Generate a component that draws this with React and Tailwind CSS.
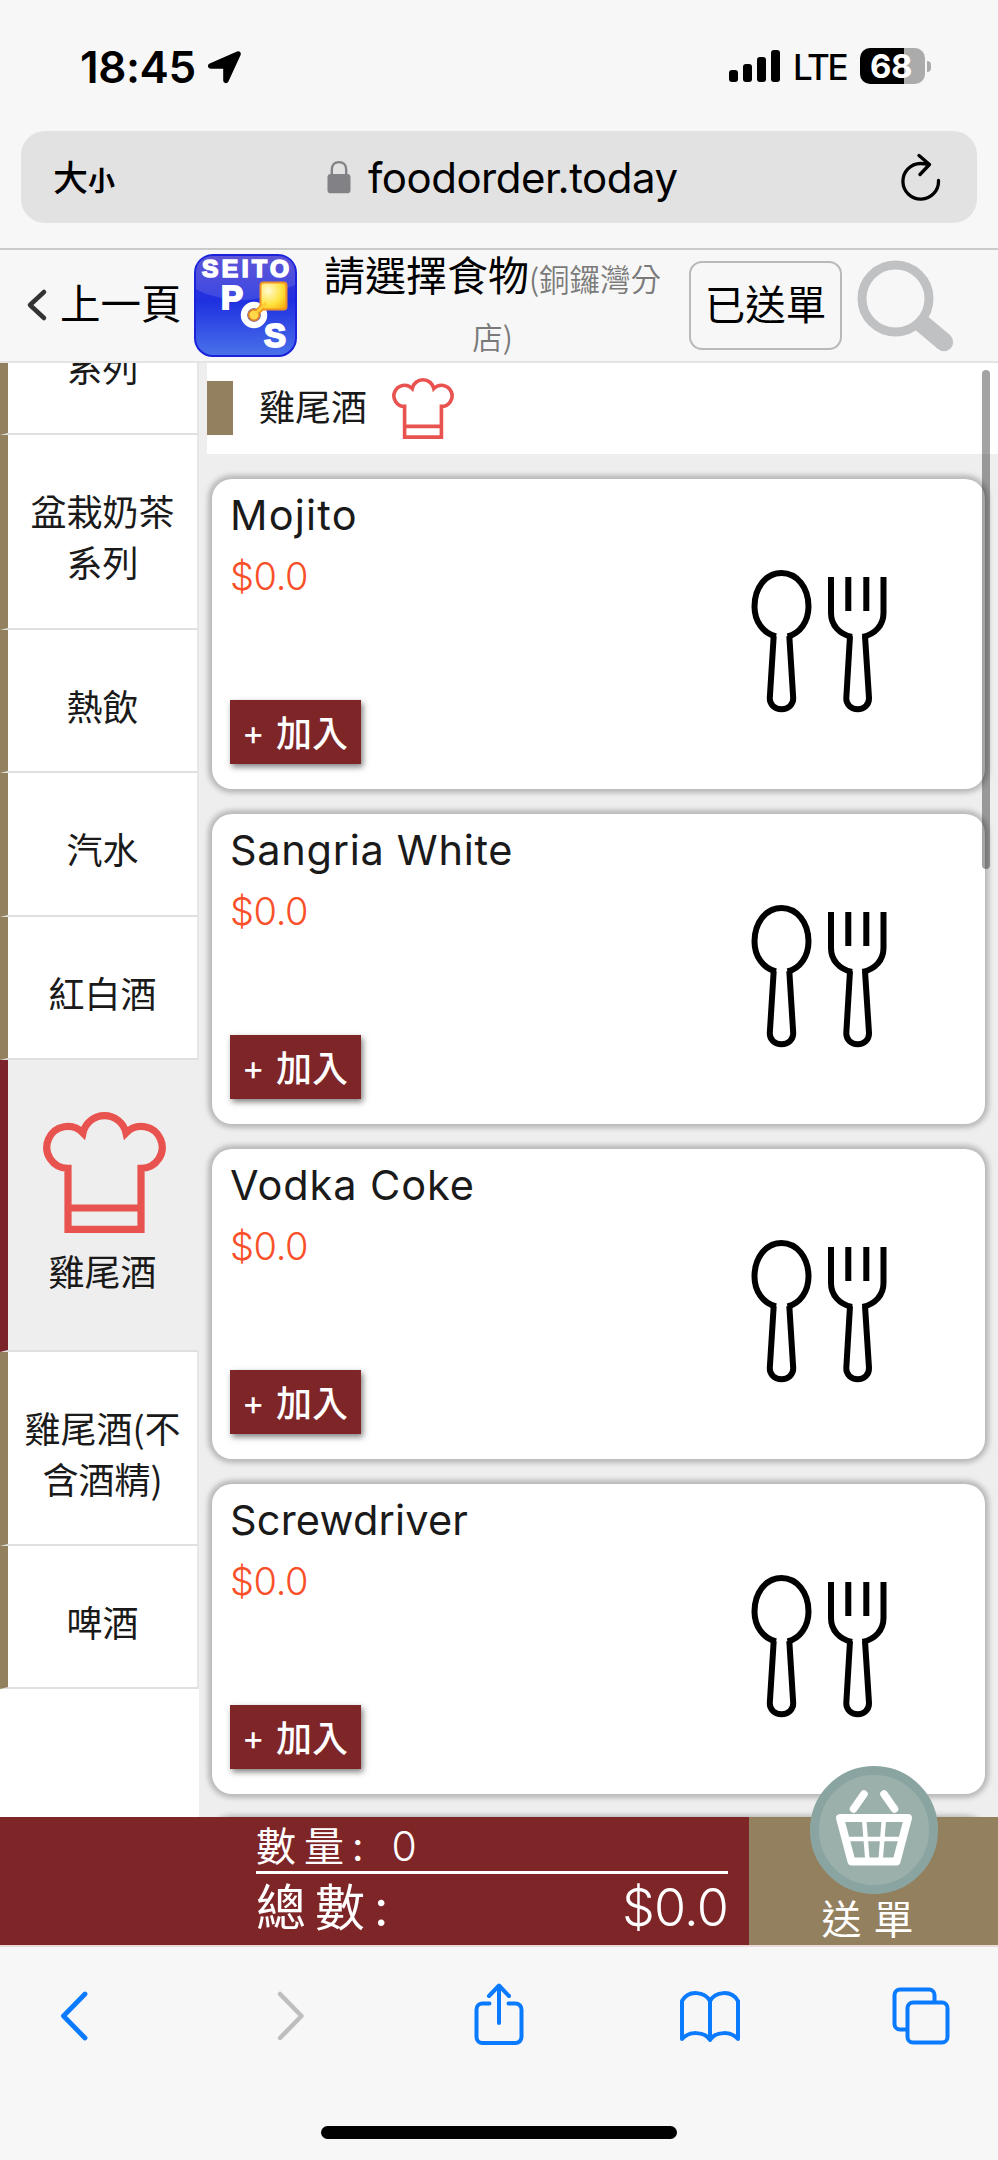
import React from 'react';
import clsx from 'clsx';

const CATEGORIES = [
  { lines: ['盆栽奶茶', '系列'], size: 'h-[195px]' },
  { lines: ['熱飲'], size: 'h-[143px]' },
  { lines: ['汽水'], size: 'h-[144px]' },
  { lines: ['紅白酒'], size: 'h-[143px]' },
  { lines: ['雞尾酒'], size: 'h-[292px]', active: true },
  { lines: ['雞尾酒(不', '含酒精)'], size: 'h-[194px]' },
  { lines: ['啤酒'], size: 'h-[143px]' },
];

const DRINKS = [
  { name: 'Mojito', price: '$0.0', tracking: 'tracking-[1.2px]' },
  { name: 'Sangria White', price: '$0.0', tracking: 'tracking-[0.7px]' },
  { name: 'Vodka Coke', price: '$0.0', tracking: 'tracking-[0.9px]' },
  { name: 'Screwdriver', price: '$0.0', tracking: 'tracking-[0.2px]' },
];

function ChefHat({ className }) {
  return (
    <svg className={className} viewBox="0 0 123 123" fill="none" stroke="#e9534f" strokeWidth="7.2">
      <path d="M25 119.400V58.400A21 21 0 1 1 40 22.900A22 22 0 0 1 83 22.900A21 21 0 1 1 98 58.400V119.400z" />
      <path d="M25 98h73" />
    </svg>
  );
}

function SpoonFork() {
  return (
    <svg className="h-[144px] w-[137px]" viewBox="0 0 137 144" fill="none" stroke="#000" strokeWidth="6">
      <path d="M25 67.500C12 64 3.500 52.500 3.500 37.500 3.500 18.500 15 4 30.500 4S57.500 18.500 57.500 37.500c0 15-8.500 27-21 30" />
      <path d="M22.700 67l-3.900 62c-.3 6.500 5 11.300 11.700 11.300s12-4.800 11.700-11.300l-3.900-62" />
      <path d="M80 8v36c0 12 8 21 21 24M132.500 8v36c0 12-8 21-21 24M97.300 8v34M115.300 8v34" />
      <path d="M99 67l-3.700 62c-.3 6.500 5 11.300 11.400 11.300s11.500-4.800 11.300-11.300L114 67" />
    </svg>
  );
}

function Logo() {
  return (
    <svg className="h-[103px] w-[103px] shrink-0" viewBox="0 0 103 103">
      <defs>
        <linearGradient id="logoBlue" x1="0" y1="0" x2="0" y2="1">
          <stop offset="0" stopColor="#4a3ed0" />
          <stop offset="0.45" stopColor="#1f2fe0" />
          <stop offset="1" stopColor="#4a72ea" />
        </linearGradient>
        <radialGradient id="logoGold" cx="0.3" cy="0.3" r="0.9">
          <stop offset="0" stopColor="#fffad0" />
          <stop offset="0.6" stopColor="#ffe23c" />
          <stop offset="1" stopColor="#f8a80c" />
        </radialGradient>
      </defs>
      <rect x="1" y="1" width="101" height="101" rx="18" fill="url(#logoBlue)" stroke="#1a22dc" strokeWidth="2" />
      <path d="M2 35V18C2 8 9 2 19 2h65c10 0 17 6 17 16v13C80 39 60 50 35 45 20 43 8 39 2 35z" fill="#fff" opacity="0.12" />
      <g fill="#fff" stroke="#fff" fontFamily="Liberation Sans, sans-serif" fontWeight="700">
        <text x="8" y="22.500" fontSize="24.500" strokeWidth="1.700" textLength="87">SEITO</text>
        <text x="27" y="55" fontSize="33" strokeWidth="2">P</text>
        <text x="70" y="93" fontSize="33" strokeWidth="2">S</text>
      </g>
      <circle cx="60" cy="61" r="10" fill="none" stroke="#fff" strokeWidth="6.500" />
      <path d="M61 60L76 46" stroke="#f09a1c" strokeWidth="6" />
      <rect x="66.500" y="28.500" width="26" height="27" rx="3" fill="url(#logoGold)" stroke="#f0912a" strokeWidth="2" />
      <circle cx="60" cy="61" r="5.500" fill="#ffd84a" stroke="#d9822b" strokeWidth="2" />
      <path d="M62 59L72 49" stroke="#ffcc33" strokeWidth="3" />
    </svg>
  );
}

function StatusBar() {
  return (
    <div className="flex h-[131px] items-start pt-[48px] pl-[80px] pr-[67px]">
      <span className="w-[117px] text-[44px] leading-[38px] font-semibold tracking-[-0.4px] whitespace-nowrap">18:45</span>
      <svg className="mt-[1px] ml-[10px] h-[36px] w-[36px]" viewBox="0 0 36 36">
        <path d="M3 15.500L30.500 3.500c1.500-.6 2.800.7 2.200 2.200L20.500 32c-.8 1.800-3.300 1.400-3.300-.6V18.700H4C1.700 18.700 1.200 16.300 3 15.500z" stroke="#000" strokeWidth="2" strokeLinejoin="round" />
      </svg>
      <div className="ml-auto flex h-[36px] items-center">
        <div className="mb-[1px] flex h-[32px] items-end gap-[5px]">
          <i className="h-[12px] w-[9px] rounded-[3px] bg-black" />
          <i className="h-[18px] w-[9px] rounded-[3px] bg-black" />
          <i className="h-[25px] w-[9px] rounded-[3px] bg-black" />
          <i className="h-[32px] w-[9px] rounded-[3px] bg-black" />
        </div>
        <span className="mt-[2px] ml-[13px] w-[67px] text-[35px] leading-[38px] font-medium tracking-[-2.4px]">LTE</span>
        <div className="flex h-[36px] w-[65px] items-center justify-center rounded-[10px] bg-[linear-gradient(90deg,#000_0_44px,#ababab_44px)] pr-[3px] text-[33px] font-bold text-white">
          <span className="leading-[36px] tracking-[-0.5px]">68</span>
        </div>
        <i className="ml-[2px] h-[11px] w-[4px] rounded-r-full bg-[#ababab]" />
      </div>
    </div>
  );
}

function AddressBar() {
  return (
    <div className="mx-[21px] flex h-[92px] items-center rounded-[24px] bg-[#e2e2e2] pl-[32px] pr-[36px]">
      <span className="flex w-[274px] items-baseline pb-[2px] font-['Noto_Sans_CJK_TC',sans-serif] font-medium">
        <span className="text-[35px]">大</span>
        <span className="text-[27px] font-bold">小</span>
      </span>
      <svg className="h-[34px] w-[24px]" viewBox="0 0 25 34">
        <path d="M5 15V9.500C5 4.500 8 1.500 12.500 1.500S20 4.500 20 9.500V15" fill="none" stroke="#828286" strokeWidth="2.500" />
        <rect x="0.500" y="14" width="24" height="20" rx="3.500" fill="#828286" />
      </svg>
      <span className="ml-[17px] text-[42px] tracking-[-0.5px] whitespace-nowrap">foodorder.today</span>
      <svg className="mb-[3px] ml-auto h-[50px] w-[42px]" viewBox="0 0 42 50" fill="none" stroke="#000" strokeWidth="3.300" strokeLinecap="round" strokeLinejoin="round">
        <path d="M39.500 29.500A17.800 17.800 0 1 1 21.500 12.500C25 12.500 27.500 13 30 13.500M20 4.500l10.500 9-9.500 10" />
      </svg>
    </div>
  );
}

function ShopHeader() {
  return (
    <header className="flex h-[115px] shrink-0 items-start border-t-2 border-b-2 border-t-[#cacaca] border-b-[#e4e4e4] pl-[26px]">
      <svg className="mt-[38px] h-[34px] w-[22px]" viewBox="0 0 22 34" fill="none" stroke="#333" strokeWidth="4.500" strokeLinecap="round" strokeLinejoin="round">
        <path d="M18 4L4 17l14 13" />
      </svg>
      <span className="mt-[23px] ml-[12px] w-[134px] text-[40.5px] leading-[58px] font-normal whitespace-nowrap">上一頁</span>
      <div className="mt-[4px]"><Logo /></div>
      <div className="-mt-[6px] ml-[22px] w-[347px] text-center text-[30.5px] leading-[58px] font-[350] text-[#7a7a7a]">
        <span className="text-[41px] font-normal text-black">請選擇食物</span>(銅鑼灣分<br />店)
      </div>
      <button className="mt-[11px] ml-[23px] flex h-[89px] w-[153px] items-center justify-center rounded-[13px] border-2 border-[#b9b9b9] pb-[5px] text-[40.5px] font-normal">已送單</button>
      <svg className="mt-[9px] ml-[14px] h-[94px] w-[100px]" viewBox="0 0 100 94" fill="none" stroke="#bfc1c3">
        <circle cx="39.500" cy="39.500" r="33.500" strokeWidth="9" />
        <path d="M63 62L88 83" strokeWidth="18.500" />
        <circle cx="88" cy="83" r="9.200" fill="#bfc1c3" stroke="none" />
      </svg>
    </header>
  );
}

function Category({ item }) {
  return (
    <li
      className={clsx(
        'flex shrink-0 flex-col items-center justify-center border-r-2 border-b-2 border-l-8',
        item.size,
        item.active
          ? 'border-r-[#eee] border-b-[#e0e0e0] border-l-[#7c222b] bg-[#eee] pb-[5px]'
          : 'border-r-[#e6e6e6] border-b-[#e0e0e0] border-l-[#93805f] bg-white pt-[9px]'
      )}
    >
      {item.active && <ChefHat className="mb-[12px] ml-[3px] h-[123px] w-[123px] shrink-0" />}
      {item.lines.map((line) => (
        <span key={line} className="leading-[51px] whitespace-nowrap">{line}</span>
      ))}
    </li>
  );
}

function DrinkCard({ drink }) {
  return (
    <article className="flex h-[310px] shrink-0 justify-between rounded-[20px] bg-white pt-[6px] pl-[18px] shadow-[0_0_5px_4px_#b9b9b9]">
      <div className="flex flex-col items-start">
        <h3 className={clsx("font-[Inter] text-[41.5px] leading-[61px] font-normal text-[#1a1a1a] whitespace-nowrap", drink.tracking)}>{drink.name}</h3>
        <p className="font-[Inter] text-[38px] leading-[60px] font-[350] tracking-[-0.4px] text-[#f9502a]">{drink.price}</p>
        <button className="mt-[94px] flex h-[64px] w-[131px] items-center bg-[#7e2528] pb-[3px] pl-[12px] text-[36px] font-medium text-white shadow-[2px_3px_6px_rgba(0,0,0,0.5)]">
          <span className="mt-[3px] w-[34px] text-left font-[Inter] text-[34px] font-normal">+</span>加入
        </button>
      </div>
      <div className="mt-[84px] mr-[97px]">
        <SpoonFork />
      </div>
    </article>
  );
}

function OrderBar() {
  return (
    <footer className="relative z-10 flex h-[130px] shrink-0 border-b-2 border-[#ead9d6] text-white">
      <div className="w-[749px] bg-[#7e2528] pl-[256px] pr-[21px]">
        <div className="flex h-[57px] items-center border-b-[3px] border-white pt-[5px] text-[40px] tracking-[8px] whitespace-nowrap">
          數量:<span className="ml-[20px] font-[Inter] text-[41px] font-[350]">0</span>
        </div>
        <div className="flex h-[68px] items-center justify-between text-[50px] whitespace-nowrap">
          <span className="tracking-[9px]">總數:</span>
          <span className="font-[Inter] text-[52px] font-[350] tracking-[-0.8px]">$0.0</span>
        </div>
      </div>
      <div className="flex flex-1 flex-col items-center bg-[#93805f]">
        <div className="-mt-[51px] flex h-[128px] w-[128px] shrink-0 items-center justify-center rounded-full border-[9px] border-[#8aa5a1] bg-[#9bb0ab]">
          <svg className="h-[80px] w-[80px]" viewBox="0 0 80 80" fill="none" stroke="#fff" strokeLinecap="round" strokeLinejoin="round">
            <path d="M30 4L19.500 19M50 4L60.500 19" strokeWidth="7.500" />
            <path d="M6 28h68L62.500 71.500h-45z" strokeWidth="8" />
            <path d="M30 28l3.500 43M50 28l-3.500 43M11 49h58" strokeWidth="4.500" />
          </svg>
        </div>
        <span className="-mt-[4px] text-[40px] leading-[60px] tracking-[12px]">送單</span>
      </div>
    </footer>
  );
}

function BrowserToolbar() {
  return (
    <nav className="flex h-[179px] shrink-0 items-start pt-[35px] pl-[58px]">
      <svg className="mt-[7px] h-[54px] w-[32px]" viewBox="0 0 32 54" fill="none" stroke="#0a7aff" strokeWidth="4.800" strokeLinecap="round" strokeLinejoin="round">
        <path d="M27 5L5.500 27 27 49" />
      </svg>
      <svg className="mt-[7px] ml-[185px] h-[54px] w-[32px]" viewBox="0 0 32 54" fill="none" stroke="#bebebe" strokeWidth="4.500" strokeLinecap="round" strokeLinejoin="round">
        <path d="M5 5l21.500 22L5 49" />
      </svg>
      <svg className="ml-[166px] h-[66px] w-[52px]" viewBox="0 0 52 66" fill="none" stroke="#0a7aff" strokeWidth="4" strokeLinecap="round" strokeLinejoin="round">
        <path d="M16.500 21.500H9.500a6 6 0 0 0-6 6V55a6 6 0 0 0 6 6h33a6 6 0 0 0 6-6V27.500a6 6 0 0 0-6-6h-7M26 41V4.500M16 14L26 3.500 36 14" />
      </svg>
      <svg className="mt-[6px] ml-[152px] h-[56px] w-[66px]" viewBox="0 0 66 56" fill="none" stroke="#0a7aff" strokeWidth="4" strokeLinejoin="round">
        <path d="M33 13C28 4 12 1 5 13v38c7-8 22-8 28 1V13zM33 13c5-9 21-12 28 0v38c-7-8-22-8-28 1" />
      </svg>
      <svg className="mt-[4px] ml-[148px] h-[60px] w-[60px]" viewBox="0 0 60 60" fill="none" stroke="#0a7aff" strokeWidth="4">
        <rect x="16.500" y="16.500" width="40" height="40" rx="5.500" />
        <path d="M16.500 43.500H9A5.500 5.500 0 0 1 3.500 38V9A5.500 5.500 0 0 1 9 3.500h29A5.500 5.500 0 0 1 43.500 9v7.500" />
      </svg>
    </nav>
  );
}

export default function App() {
  return (
    <div className="flex h-[2160px] w-[998px] flex-col overflow-hidden bg-[#f7f7f7] font-[Inter,'Noto_Sans_CJK_TC',sans-serif] text-black">
      <StatusBar />
      <AddressBar />
      <div className="mt-[25px] flex h-[1569px] flex-col font-['Noto_Sans_CJK_TC',sans-serif] font-[350]">
        <ShopHeader />
        <main className="relative flex min-h-0 flex-1 overflow-hidden bg-[#eee]">
          <ul className="flex w-[199px] shrink-0 flex-col bg-white text-[36px] font-normal text-[#1a1a1a]">
            <li className="flex h-[72px] shrink-0 items-end justify-center overflow-hidden border-r-2 border-b-2 border-l-8 border-r-[#e6e6e6] border-b-[#e0e0e0] border-l-[#93805f] pb-[32px] leading-[70px]">
              系列
            </li>
            {CATEGORIES.map((item) => (
              <Category key={item.lines.join('')} item={item} />
            ))}
          </ul>
          <section className="ml-[8px] flex flex-1 flex-col">
            <div className="flex h-[91px] shrink-0 items-center bg-white pb-[2px]">
              <i className="h-[54px] w-[26px] bg-[#93805f]" />
              <h2 className="ml-[26px] pb-[5px] text-[36px] font-normal text-[#1a1a1a]">雞尾酒</h2>
              <ChefHat className="ml-[25px] h-[62px] w-[62px]" />
            </div>
            <div className="flex flex-col gap-[25px] pt-[25px] pl-[5px] pr-[13px]">
              {DRINKS.map((drink) => (
                <DrinkCard key={drink.name} drink={drink} />
              ))}
              <div className="h-[20px] rounded-t-[20px] bg-white shadow-[0_0_5px_4px_#b9b9b9]" />
            </div>
          </section>
          <i className="absolute top-[7px] right-[8px] h-[499px] w-[8px] rounded-full bg-black/36" />
        </main>
      </div>
      <OrderBar />
      <BrowserToolbar />
      <div className="mx-auto h-[13px] w-[356px] rounded-full bg-black" />
    </div>
  );
}
